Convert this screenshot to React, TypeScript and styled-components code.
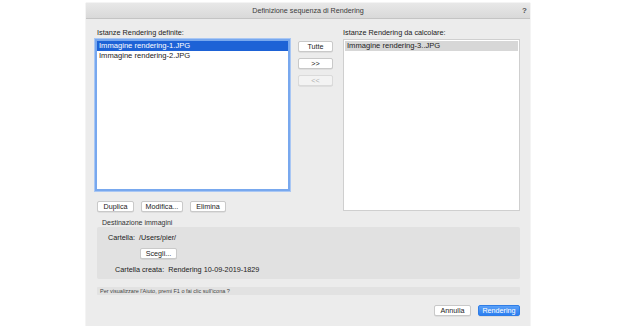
import styled, { createGlobalStyle } from 'styled-components'

const Global = createGlobalStyle`
  body {
    margin: 0;
    background: #ffffff;
    font-family: "Liberation Sans", Arial, sans-serif;
  }
`

const Window = styled.div`
  margin: 3px 0 0 86px;
  width: 444px;
  height: 323px;
  background: #ececec;
  display: flex;
  flex-direction: column;
  box-shadow: 0 0 1px rgba(0, 0, 0, 0.25);
`
const TitleBar = styled.div`
  height: 15px;
  display: flex;
  align-items: center;
  justify-content: center;
  position: relative;
  background: linear-gradient(#e8e8e8, #d9d9d9);
  border-bottom: 1px solid #c4c4c4;
  font-size: 7.2px;
  color: #3a3a3a;
`
const Help = styled.span`
  position: absolute;
  right: 3px;
  top: 3px;
  font-size: 8px;
  font-weight: bold;
  color: #555;
`
const Body = styled.div`
  padding: 9px 10px 0 9px;
  display: flex;
  flex-direction: column;
`
const Top = styled.div`
  display: grid;
  grid-template-columns: 195px 35px 1fr;
  column-gap: 8px;
  align-items: start;
  & > :nth-child(3) {
    margin-left: 2px;
  }
`
const Column = styled.div`
  display: flex;
  flex-direction: column;
`
const Label = styled.div<{ $indent?: number }>`
  font-size: 7.3px;
  color: #222;
  height: 10px;
  line-height: 10px;
  margin: 0 0 1px ${(p) => p.$indent ?? 2}px;
`
const List = styled.div<{ $focus?: boolean; $height: number }>`
  height: ${(p) => p.$height}px;
  box-sizing: border-box;
  background: #fff;
  border: ${(p) => (p.$focus ? '2px solid #78a8ee' : '1px solid #cfcfcf')};
  padding: ${(p) => (p.$focus ? '0' : '1px')};
  box-shadow: ${(p) => (p.$focus ? '0 0 0 1px #a9c7f4' : 'none')};
`
const Row = styled.div<{ $sel?: 'blue' | 'grey' }>`
  height: 10px;
  line-height: 10px;
  font-size: 7.6px;
  padding-left: 2px;
  background: ${(p) => (p.$sel === 'blue' ? '#1d62d6' : p.$sel === 'grey' ? '#d7d7d7' : 'transparent')};
  color: ${(p) => (p.$sel === 'blue' ? '#fff' : '#222')};
`
const ButtonStack = styled.div`
  display: flex;
  flex-direction: column;
  gap: 6px;
  padding-top: 13px;
`
const Button = styled.button<{ $w?: number; $primary?: boolean }>`
  width: ${(p) => (p.$w ? `${p.$w}px` : 'auto')};
  height: 11px;
  padding: 0;
  font-family: inherit;
  font-size: 7.2px;
  line-height: 9px;
  border-radius: 2px;
  border: 1px solid ${(p) => (p.$primary ? '#2f7de6' : '#c9c9c9')};
  background: ${(p) => (p.$primary ? 'linear-gradient(#5aa0f7, #2b7ef0)' : '#fff')};
  color: ${(p) => (p.$primary ? '#fff' : '#222')};
  box-shadow: 0 0.5px 0 rgba(0, 0, 0, 0.12);
  &:disabled {
    background: #f3f3f3;
    color: #b0b0b0;
    border-color: #dadada;
  }
`
const ButtonRow = styled.div`
  display: flex;
  gap: 7px;
  margin: 10px 0 0 2px;
`
const GroupLabel = styled.div`
  font-size: 7px;
  color: #333;
  height: 9px;
  line-height: 9px;
  margin: 6px 0 0 7px;
`
const Group = styled.div`
  margin-left: 2px;
  height: 52px;
  background: #e1e1e1;
  border-radius: 2px;
  display: flex;
  flex-direction: column;
  gap: 5px;
  padding-top: 5px;
  box-sizing: border-box;
  font-size: 7.25px;
  color: #222;
`
const GroupLine = styled.div<{ $indent: number }>`
  display: flex;
  align-items: center;
  margin-left: ${(p) => p.$indent}px;
  height: 11px;
`
const HelpBar = styled.div`
  margin: 8px 0 0 2px;
  height: 8px;
  line-height: 8px;
  background: #e2e2e2;
  border-radius: 1px;
  font-size: 5.5px;
  color: #444;
  padding-left: 3px;
`
const Footer = styled.div`
  display: flex;
  justify-content: flex-end;
  gap: 7px;
  margin-top: 10px;
`

const App = () => {
  return (
    <>
      <Global />
      <Window>
        <TitleBar>
          Definizione sequenza di Rendering
          <Help>?</Help>
        </TitleBar>
        <Body>
          <Top>
            <Column>
              <Label>Istanze Rendering definite:</Label>
              <List $focus $height={152}>
                <Row $sel="blue">Immagine rendering-1.JPG</Row>
                <Row>Immagine rendering-2.JPG</Row>
              </List>
              <ButtonRow>
                <Button $w={37}>Duplica</Button>
                <Button $w={42}>Modifica...</Button>
                <Button $w={36}>Elimina</Button>
              </ButtonRow>
            </Column>
            <ButtonStack>
              <Button $w={35}>Tutte</Button>
              <Button $w={35}>&gt;&gt;</Button>
              <Button $w={35} disabled>
                &lt;&lt;
              </Button>
            </ButtonStack>
            <Column>
              <Label $indent={0}>Istanze Rendering da calcolare:</Label>
              <List $height={172}>
                <Row $sel="grey">Immagine rendering-3..JPG</Row>
              </List>
            </Column>
          </Top>
          <GroupLabel>Destinazione immagini</GroupLabel>
          <Group>
            <GroupLine $indent={11}>Cartella:&nbsp; /Users/pier/</GroupLine>
            <GroupLine $indent={43}>
              <Button $w={37}>Scegli...</Button>
            </GroupLine>
            <GroupLine $indent={18}>Cartella creata:&nbsp; Rendering 10-09-2019-1829</GroupLine>
          </Group>
          <HelpBar>Per visualizzare l'Aiuto, premi F1 o fai clic sull'icona ?</HelpBar>
          <Footer>
            <Button $w={37}>Annulla</Button>
            <Button $w={42} $primary>
              Rendering
            </Button>
          </Footer>
        </Body>
      </Window>
    </>
  )
}

export default App
